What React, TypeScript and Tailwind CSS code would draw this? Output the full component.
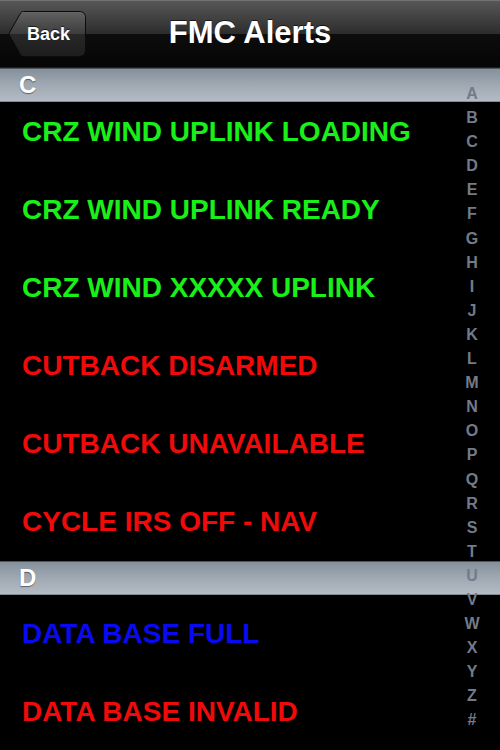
import React from "react";

type Alert = { text: string; color: string };

const GREEN = "text-[#19f019]";
const RED = "text-[#f00a0a]";
const BLUE = "text-[#0a0af0]";

const cRows: Alert[] = [
  { text: "CRZ WIND UPLINK LOADING", color: GREEN },
  { text: "CRZ WIND UPLINK READY", color: GREEN },
  { text: "CRZ WIND XXXXX UPLINK", color: GREEN },
  { text: "CUTBACK DISARMED", color: RED },
  { text: "CUTBACK UNAVAILABLE", color: RED },
  { text: "CYCLE IRS OFF - NAV", color: RED },
];

const dRows: Alert[] = [
  { text: "DATA BASE FULL", color: BLUE },
  { text: "DATA BASE INVALID", color: RED },
];

const INDEX = "ABCDEFGHIJKLMNOPQRSTUVWXYZ#".split("");

function Row({ a }: { a: Alert }) {
  return (
    <div className="h-[78px] flex items-center pl-[22px]">
      <span className={`text-[28px] font-bold leading-none ${a.color}`}>{a.text}</span>
    </div>
  );
}

function SectionHeader({ letter }: { letter: string }) {
  return (
    <div className="h-[34px] flex items-center pl-[19px] border-t border-t-[#4f555c] border-b border-b-[#858c94] bg-gradient-to-b from-[#84909b] via-[#a0a9b3] to-[#b3bbc4]">
      <span className="text-[24px] font-bold leading-none text-white [text-shadow:0_1px_1px_rgba(0,0,0,0.45)]">
        {letter}
      </span>
    </div>
  );
}

function BackButton() {
  return (
    <div className="relative w-[78px] h-[46px] ml-[8px] shrink-0">
      <svg className="absolute inset-0" width="78" height="46" viewBox="0 0 78 46">
        <defs>
          <linearGradient id="bb" x1="0" y1="0" x2="0" y2="1">
            <stop offset="0" stopColor="#616161" />
            <stop offset="0.5" stopColor="#3c3c3c" />
            <stop offset="0.5" stopColor="#282828" />
            <stop offset="1" stopColor="#1d1d1d" />
          </linearGradient>
        </defs>
        <path
          d="M0.7,23 L12.6,2 Q13.5,0.5 15.5,0.5 H71 Q77.5,0.5 77.5,7 V39 Q77.5,45.5 71,45.5 H15.5 Q13.5,45.5 12.6,44 Z"
          fill="url(#bb)"
          stroke="#0b0b0b"
          strokeWidth="1"
        />
        <path d="M14,1.6 H71 Q76.4,1.6 76.4,7" fill="none" stroke="#747474" strokeWidth="0.8" opacity="0.6" />
      </svg>
      <div className="absolute inset-0 flex items-center pl-[19px]">
        <span className="text-[18px] font-bold leading-none text-white [text-shadow:0_-1px_0_rgba(0,0,0,0.6)]">
          Back
        </span>
      </div>
    </div>
  );
}

export default function App() {
  return (
    <div className="relative w-[500px] h-[750px] overflow-hidden bg-black font-['Liberation_Sans',Arial,sans-serif]">
      {/* Nav bar */}
      <div className="relative h-[68px] border-t border-t-[#727272] bg-[linear-gradient(to_bottom,#575757_0%,#2c2c2c_50%,#0d0d0d_50%,#050505_100%)] border-b border-b-[#1e1e1e] flex items-center">
        <BackButton />
        <div className="absolute inset-0 flex items-center justify-center pb-[4px]">
          <span className="text-[31px] font-bold leading-none text-white [text-shadow:0_-1px_0_rgba(0,0,0,0.6)]">
            FMC Alerts
          </span>
        </div>
      </div>

      {/* List */}
      <div>
        <SectionHeader letter="C" />
        <div className="h-[69px] overflow-hidden">
          <div className="-mt-[9px]">
            <Row a={cRows[0]} />
          </div>
        </div>
        {cRows.slice(1).map((a) => (
          <Row key={a.text} a={a} />
        ))}
        <SectionHeader letter="D" />
        {dRows.map((a) => (
          <Row key={a.text} a={a} />
        ))}
      </div>

      {/* Section index */}
      <div className="absolute top-[82px] left-[457px] w-[30px] flex flex-col items-center">
        {INDEX.map((l) => (
          <span key={l} className="h-[24.1px] leading-[24.1px] text-[16px] font-bold text-[#737b89]">
            {l}
          </span>
        ))}
      </div>
    </div>
  );
}
